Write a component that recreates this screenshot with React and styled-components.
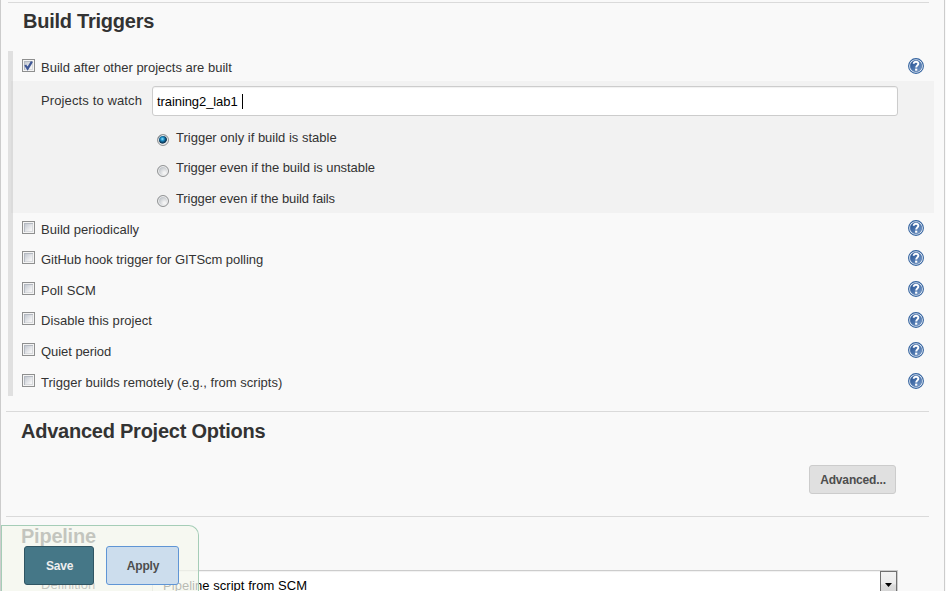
import React from "react";
import styled, { createGlobalStyle, css } from "styled-components";

const GlobalStyle = createGlobalStyle`
  * { box-sizing: border-box; }
  html, body { margin: 0; padding: 0; overflow: hidden; background: #f9f9f9; }
  body { font: 13px/15px "Liberation Sans", Arial, sans-serif; color: #333; }
`;

const Page = styled.main`
  width: 945px;
  height: 591px;
  overflow: hidden;
  border-left: 1px solid #ccc;
  border-right: 1px solid #ccc;
  background: #f9f9f9;
  padding-top: 2px;
`;

const Section = styled.section`
  height: ${(p) => p.$height}px;
  margin-left: ${(p) => p.$inset || 5}px;
  margin-right: 15px;
  border-top: 1px solid #dadada;
`;

const Title = styled.h2`
  margin: 0;
  padding: ${(p) => p.$top}px 0 0 15px;
  font-size: 20px;
  line-height: 24px;
  font-weight: bold;
  white-space: nowrap;
  letter-spacing: -0.24px;
`;

const Text = styled.span`
  white-space: nowrap;
  letter-spacing: ${(p) => p.$spacing || 0}px;
`;

const Group = styled.div`
  width: 926px;
  margin-top: 18px;
  background: linear-gradient(#e0e0e0, #e0e0e0) 0 0 / 5px 100% no-repeat;
`;

const Row = styled.div`
  display: flex;
  align-items: flex-start;
  height: ${(p) => p.$height}px;
  padding: 8px 10px 0 14px;
`;

const RowLabel = styled.label`
  display: flex;
  flex: 1;
  gap: 6px;
  ${Text} { padding-top: 1px; }
`;

const HelpSlot = styled.span`
  display: flex;
  margin-top: ${(p) => p.$shift}px;
`;

const Box = styled.span`
  width: 13px;
  height: 13px;
  flex: none;
  display: flex;
  border: 1px solid #8e8f8f;
  background: linear-gradient(135deg, #c4c9d1, #f4f4f5 85%) 2px 2px / 7px 7px no-repeat, #f4f4f4;
  box-shadow: inset 0 0 0 1px #f4f4f4, inset 1px 1px 0 1px #b4b9c1, inset -1px -1px 0 1px #d8dadd;
`;

const SubPanel = styled.div`
  height: 132px;
  margin-left: 3px;
  padding: 5px 0 0 28px;
  border-left: 2px solid #dbdbdb;
  background: #f2f2f2;
`;

const Field = styled.div`
  display: grid;
  grid-template-columns: 111px 746px;
  > ${Text} { padding-top: 7px; }
`;

const Input = styled.div`
  display: flex;
  align-items: center;
  height: 30px;
  padding: 1px 0 0 4px;
  border: 1px solid #ccc;
  border-radius: 3px;
  background: #fff;
  color: #000;
  box-shadow: inset 0 1px 1px rgba(0, 0, 0, 0.06);
`;

const Caret = styled.span`
  width: 1px;
  height: 15px;
  margin-left: 4px;
  background: #000;
`;

const RadioList = styled.div`
  padding: 14px 0 0 116px;
`;

const RadioRow = styled.label`
  display: flex;
  gap: 7px;
  height: ${(p) => p.$height}px;
`;

const Dot = styled.span`
  flex: none;
  width: 12px;
  height: 12px;
  margin-top: ${(p) => p.$top}px;
  border-radius: 50%;
  border: 1px solid #929495;
  background: radial-gradient(circle at 65% 70%, #f4f4f4 10%, #b9bec4 75%);
  box-shadow: inset 0 0 0 1px #f0f0f0;
  ${(p) =>
    p.$on &&
    css`
      background: radial-gradient(circle at 44% 40%, #9be6ff 0, #2496cc 20%, #0b4a73 40%, #12344e 52%, #d5dade 60%);
    `}
`;

const ButtonRow = styled.div`
  display: flex;
  justify-content: flex-end;
  padding: 22px 33px 0 0;
`;

const Button = styled.button`
  width: ${(p) => p.$width}px;
  height: ${(p) => p.$height}px;
  padding: ${(p) => p.$drop || 1}px 0 0 1px;
  border: 1px solid ${(p) => p.$edge};
  border-radius: 3px;
  background: ${(p) => p.$fill};
  color: ${(p) => p.$ink || "#4d4d4d"};
  font: bold 12px/15px "Liberation Sans", Arial, sans-serif;
  letter-spacing: ${(p) => p.$spacing || 0}px;
`;

const DefinitionRow = styled.div`
  display: grid;
  grid-template-columns: 111px 746px;
  padding: 22px 0 0 35px;
  > ${Text} { padding-top: 7px; }
`;

const Select = styled.div`
  display: flex;
  justify-content: space-between;
  height: 30px;
  padding: 0 0 0 10px;
  border: 1px solid #ccc;
  background: #fff;
  box-shadow: inset 0 1px 1px rgba(0, 0, 0, 0.06);
  color: #000;
  > ${Text} { padding-top: 7px; }
`;

const Arrow = styled.span`
  display: flex;
  justify-content: center;
  align-items: flex-start;
  width: 17px;
  height: 28px;
  padding-top: 11px;
  border: 1px solid #707070;
  background: linear-gradient(#f3f3f3 0, #ebebeb 45%, #dcdcdc 50%, #cfcfcf);
`;

const SaveBar = styled.div`
  position: fixed;
  left: 1px;
  bottom: 0;
  display: flex;
  gap: 12px;
  width: 198px;
  height: 66px;
  padding: 20px 0 0 22px;
  border: 1px solid #a5cdb7;
  border-bottom: 0;
  border-radius: 0 10px 0 0;
  background: rgba(244, 247, 238, 0.75);
`;

function Help() {
  return (
    <svg width="16" height="16" viewBox="0 0 16 16">
      <defs>
        <linearGradient id="helpFill" x1="0" y1="0" x2="1" y2="1">
          <stop offset="0" stopColor="#234e8d" />
          <stop offset="0.5" stopColor="#4a73ac" />
          <stop offset="1" stopColor="#7fa0cc" />
        </linearGradient>
      </defs>
      <circle cx="8" cy="8" r="7.4" fill="#f3f7fc" stroke="#34639f" strokeWidth="1.1" />
      <circle cx="8" cy="8" r="5.8" fill="url(#helpFill)" stroke="#34639f" strokeWidth="0.5" />
      <path d="M5.7 5.7C5.7 3.1 10.4 3.2 10.3 5.8C10.2 7.4 8.2 7.5 8.2 9.6" fill="none" stroke="#fff" strokeWidth="2" />
      <rect x="7.1" y="10.6" width="2.2" height="2.1" fill="#fff" />
    </svg>
  );
}

function Option({ label, height, spacing, checked, shift = -1 }) {
  return (
    <Row $height={height}>
      <RowLabel>
        <Box>
          {checked && (
            <svg width="11" height="11" viewBox="0 0 11 11">
              <path d="M2.2 5L4.6 8.6L8.9 1.7" fill="none" stroke="#3f5796" strokeWidth="2.2" />
            </svg>
          )}
        </Box>
        <Text $spacing={spacing}>{label}</Text>
      </RowLabel>
      <HelpSlot $shift={shift}>
        <Help />
      </HelpSlot>
    </Row>
  );
}

const options = [
  { label: "Build periodically", height: 30, spacing: 0.03 },
  { label: "GitHub hook trigger for GITScm polling", height: 31, spacing: -0.05 },
  { label: "Poll SCM", height: 30, spacing: 0.1 },
  { label: "Disable this project", height: 31, shift: 0, spacing: 0.06 },
  { label: "Quiet period", height: 31, spacing: -0.05 },
  { label: "Trigger builds remotely (e.g., from scripts)", height: 30, spacing: 0.03 },
];

const radios = [
  { label: "Trigger only if build is stable", height: 30, top: 4, on: true },
  { label: "Trigger even if the build is unstable", height: 31, top: 5, spacing: -0.06 },
  { label: "Trigger even if the build fails", height: 20, top: 4, spacing: -0.1 },
];

export default function App() {
  return (
    <>
      <GlobalStyle />
      <Page>
        <Section $height={409} $inset={7}>
          <Title $top={6}>Build Triggers</Title>
          <Group>
            <Option label="Build after other projects are built" height={30} checked />
            <SubPanel>
              <Field>
                <Text $spacing={0.12}>Projects to watch</Text>
                <Input>
                  <Text $spacing={-0.08}>training2_lab1</Text>
                  <Caret />
                </Input>
              </Field>
              <RadioList>
                {radios.map((r) => (
                  <RadioRow key={r.label} $height={r.height}>
                    <Dot $top={r.top} $on={r.on} />
                    <Text $spacing={r.spacing}>{r.label}</Text>
                  </RadioRow>
                ))}
              </RadioList>
            </SubPanel>
            {options.map((o) => (
              <Option key={o.label} {...o} />
            ))}
          </Group>
        </Section>
        <Section $height={105}>
          <Title $top={7}>Advanced Project Options</Title>
          <ButtonRow>
            <Button $width={87} $height={29} $edge="#ccc" $fill="#e0e0e0" $drop={2} $spacing={-0.15}>
              Advanced...
            </Button>
          </ButtonRow>
        </Section>
        <Section $height={105}>
          <Title $top={7}>Pipeline</Title>
          <DefinitionRow>
            <Text>Definition</Text>
            <Select>
              <Text $spacing={0.04}>Pipeline script from SCM</Text>
              <Arrow>
                <svg width="7" height="4" viewBox="0 0 7 4">
                  <path d="M0 0H7L3.5 4Z" fill="#000" />
                </svg>
              </Arrow>
            </Select>
          </DefinitionRow>
        </Section>
        <SaveBar>
          <Button $width={70} $height={39} $edge="#2f5563" $fill="#457787" $ink="#eee" $drop={2} $spacing={-0.2}>
            Save
          </Button>
          <Button $width={73} $height={39} $edge="#5f95d5" $fill="#ccdded" $drop={2} $spacing={-0.2}>
            Apply
          </Button>
        </SaveBar>
      </Page>
    </>
  );
}
